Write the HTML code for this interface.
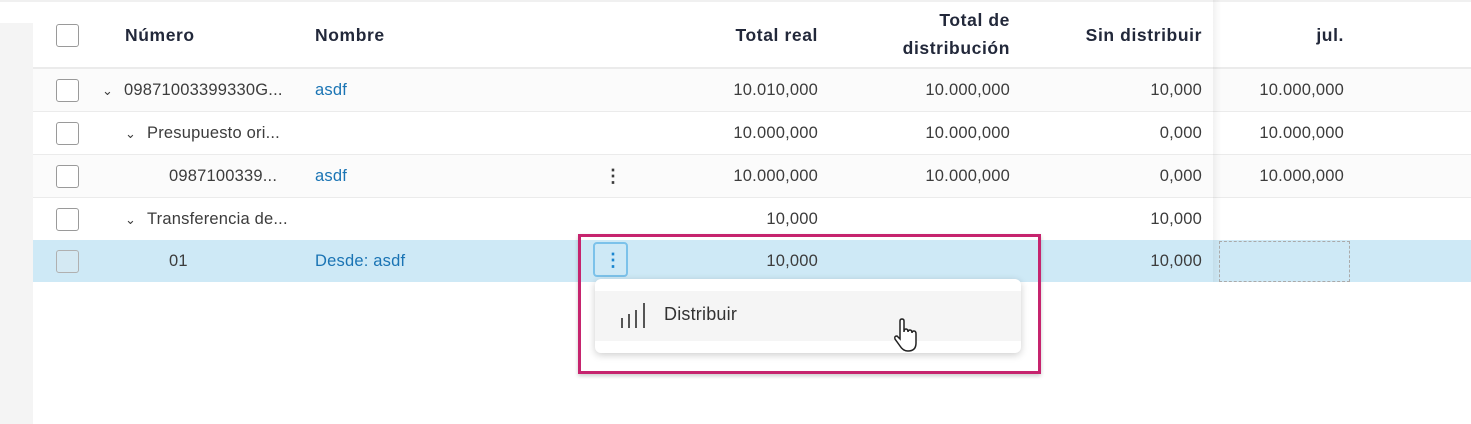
<!DOCTYPE html>
<html><head><meta charset="utf-8"><style>
*{box-sizing:border-box;margin:0;padding:0}
body{width:1471px;height:424px;background:#fff;position:relative;overflow:hidden;font-family:"Liberation Sans",sans-serif;color:#3c3c3c}
.a{position:absolute}
.row{position:absolute;left:33px;width:1438px;height:43px;border-bottom:1px solid #ebebeb}
.cb{position:absolute;left:23px;width:23px;height:23px;border:1.5px solid #9a9a9a;border-radius:3px;background:#fff}
.t{position:absolute;font-size:16.5px;letter-spacing:0.2px;line-height:20px;white-space:nowrap}
.r{text-align:right}
.h{font-weight:bold;font-size:17.5px;letter-spacing:0.6px;color:#22283a}
.lk{color:#1a74b4}
</style></head><body>
<div class="a" style="left:0;top:0;width:1471px;height:2px;background:#f0f0f0"></div>
<div class="a" style="left:0;top:23px;width:33px;height:401px;background:#f4f4f4"></div>
<div class="row" style="top:0;height:69px;border-bottom:2px solid #ebebeb;background:transparent"></div>
<div class="cb" style="left:56px;top:24px"></div>
<div class="t h" style="left:125px;top:25px">Número</div>
<div class="t h" style="left:315px;top:25px">Nombre</div>
<div class="t h r" style="left:618px;width:200px;top:25px">Total real</div>
<div class="t h r" style="left:810px;width:200px;top:6px;line-height:28px">Total de<br>distribución</div>
<div class="t h r" style="left:1002px;width:200px;top:25px">Sin distribuir</div>
<div class="t h r" style="left:1200px;width:144px;top:25px">jul.</div>
<div class="row" style="top:69px;background:#fbfbfb"></div>
<div class="row" style="top:112px"></div>
<div class="row" style="top:155px;background:#fbfbfb"></div>
<div class="row" style="top:198px"></div>
<div class="row" style="top:240px;height:42px;background:#cee9f6;border:none"></div>
<div class="a" style="left:1213px;top:0;width:8px;height:282px;background:linear-gradient(90deg,rgba(0,0,0,0.05),rgba(0,0,0,0))"></div>

<div class="cb" style="left:56px;top:79px"></div>
<div class="t" style="left:102px;top:81px;font-size:13px">&#8964;</div>
<div class="t" style="left:124px;top:80px">09871003399330G...</div>
<div class="t lk" style="left:315px;top:80px">asdf</div>
<div class="t r" style="left:618px;width:200px;top:80px">10.010,000</div>
<div class="t r" style="left:810px;width:200px;top:80px">10.000,000</div>
<div class="t r" style="left:1002px;width:200px;top:80px">10,000</div>
<div class="t r" style="left:1144px;width:200px;top:80px">10.000,000</div>

<div class="cb" style="left:56px;top:122px"></div>
<div class="t" style="left:125px;top:124px;font-size:13px">&#8964;</div>
<div class="t" style="left:147px;top:123px">Presupuesto ori...</div>
<div class="t r" style="left:618px;width:200px;top:123px">10.000,000</div>
<div class="t r" style="left:810px;width:200px;top:123px">10.000,000</div>
<div class="t r" style="left:1002px;width:200px;top:123px">0,000</div>
<div class="t r" style="left:1144px;width:200px;top:123px">10.000,000</div>

<div class="cb" style="left:56px;top:165px"></div>
<div class="t" style="left:169px;top:166px">0987100339...</div>
<div class="t lk" style="left:315px;top:166px">asdf</div>
<div class="t" style="left:604px;top:166px;font-weight:bold;font-size:18px">&#8942;</div>
<div class="t r" style="left:618px;width:200px;top:166px">10.000,000</div>
<div class="t r" style="left:810px;width:200px;top:166px">10.000,000</div>
<div class="t r" style="left:1002px;width:200px;top:166px">0,000</div>
<div class="t r" style="left:1144px;width:200px;top:166px">10.000,000</div>

<div class="cb" style="left:56px;top:208px"></div>
<div class="t" style="left:125px;top:210px;font-size:13px">&#8964;</div>
<div class="t" style="left:147px;top:209px">Transferencia de...</div>
<div class="t r" style="left:618px;width:200px;top:209px">10,000</div>
<div class="t r" style="left:1002px;width:200px;top:209px">10,000</div>

<div class="cb" style="left:56px;top:250px;background:#d4e9f3;border-color:#b0b0b0"></div>
<div class="t" style="left:169px;top:251px">01</div>
<div class="t lk" style="left:315px;top:251px">Desde: asdf</div>
<div class="a" style="left:593px;top:242px;width:35px;height:35px;border:2px solid #7cc2ea;border-radius:4px"></div>
<div class="t" style="left:604px;top:250px;font-weight:bold;font-size:18px;color:#1a86d0">&#8942;</div>
<div class="t r" style="left:618px;width:200px;top:251px">10,000</div>
<div class="t r" style="left:1002px;width:200px;top:251px">10,000</div>
<div class="a" style="left:1219px;top:241px;width:131px;height:41px;border:1px dashed #aaa"></div>

<div class="a" style="left:595px;top:279px;width:426px;height:74px;background:#fff;border-radius:6px;box-shadow:0 2px 8px rgba(0,0,0,0.2)"></div>
<div class="a" style="left:595px;top:291px;width:426px;height:50px;background:#f5f5f5"></div>
<svg class="a" style="left:620px;top:302px" width="28" height="28"><g stroke="#555" stroke-width="2"><line x1="2" y1="16" x2="2" y2="26"/><line x1="9" y1="12" x2="9" y2="26"/><line x1="16" y1="8" x2="16" y2="26"/><line x1="24" y1="1" x2="24" y2="26"/></g></svg>
<div class="t" style="left:664px;top:304px;font-size:18px;color:#333">Distribuir</div>
<svg class="a" style="left:892px;top:318px" width="30" height="36" viewBox="0 0 30 36"><path d="M8 3 Q8 1 10 1 Q12 1 12 3 V14 Q12 11 14 11 Q16 11 16 14 Q16 12 18 12 Q20 12 20 15 Q20 13 22 13 Q24 13 24 16 V25 Q24 33 16 33 Q11 33 8 28 L3 21 Q2 18 5 18 L8 21 Z" fill="#fff" stroke="#222" stroke-width="1.5"/></svg>
<div class="a" style="left:578px;top:234px;width:463px;height:140px;border:3px solid #c6246e;box-shadow:0 2px 4px rgba(0,0,0,0.2)"></div>
</body></html>
